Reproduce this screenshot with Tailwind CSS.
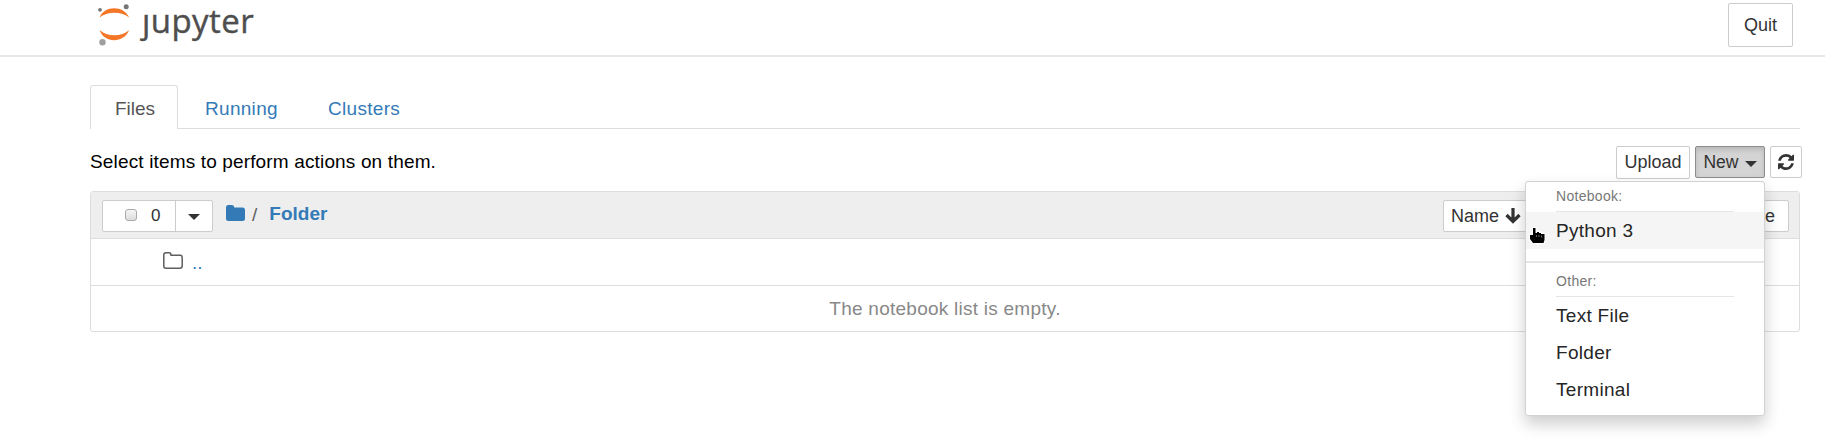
<!DOCTYPE html>
<html lang="en"><head><meta charset="utf-8"><title>Jupyter</title>
<script src="https://cdn.jsdelivr.net/npm/@tailwindcss/browser@4"></script></head>
<body class="h-[444px] overflow-hidden bg-white text-[19px] leading-[24px] text-black font-['Liberation_Sans',Arial,sans-serif]">
<header class="flex h-[57px] items-start justify-between border-b-2 border-[#e7e7e7] pl-[96px] pr-[32px]">
  <div class="flex items-start">
    <svg class="h-[48px] w-[36px]" viewBox="0 0 36 48">
      <path d="M3.5 17.5C8 5 28 5 33.2 17.5C26 11 11 11 3.5 17.5Z" fill="#f37726"/>
      <path d="M3.5 30C8 43.500 28 43.500 33.200 30C26 37 11 37 3.500 30Z" fill="#f37726"/>
      <circle cx="4" cy="9.800" r="1.900" fill="#767677"/><circle cx="30.200" cy="6.700" r="2.500" fill="#767677"/><circle cx="6.500" cy="42.200" r="3.200" fill="#9e9e9e"/>
    </svg>
    <span class="ml-[10px] mt-[3px] text-[33px] leading-[36px] tracking-[0.45px] text-[#4e4e4e] font-['Open_Sans',sans-serif] [-webkit-text-stroke:0.4px_#4e4e4e]">ȷupyter</span>
  </div>
  <div class="mt-[3px] flex h-[44px] w-[65px] items-center justify-center rounded-[2px] border border-[#ccc] text-[#333] text-[18px]">Quit</div>
</header>
<main class="ml-[90px] mt-[28px] w-[1710px]">
  <nav class="flex h-[44px] border-b border-[#ddd] tracking-[0.3px]">
    <div class="h-[44px] w-[88px] rounded-t-[3px] border border-b-0 border-[#ddd] bg-white pl-[24px] pt-[11px] text-[#555]"><span class="tracking-normal">Files</span></div>
    <div class="w-[122px] pl-[27px] pt-[12px] text-[#337ab7]">Running</div>
    <div class="pl-[28px] pt-[12px] text-[#337ab7]">Clusters</div>
  </nav>
  <div class="relative -mr-[2px] flex h-[62px] items-start justify-between pt-[17px]">
    <div class="pt-[4px] tracking-[0.15px]"><span>Select items to perform actions on them.</span></div>
    <div class="flex items-start gap-[5px] text-[18px] text-[#333]">
      <div class="flex h-[33px] w-[74px] items-center justify-center rounded-[2px] border border-[#ccc] pb-[1px]">Upload</div>
      <div class="flex h-[32px] w-[70px] items-center justify-center gap-[6px] rounded-[2px] border border-[#8c8c8c] bg-[#d4d4d4] shadow-[inset_0_3px_5px_rgba(0,0,0,.125)] text-[17.500px]">New<svg class="mt-[3px] h-[6px] w-[12px]" viewBox="0 0 12 6"><path d="M0 0H12L6 6Z" fill="#333"/></svg></div>
      <div class="flex h-[32px] w-[32px] items-center justify-center rounded-[2px] border border-[#ccc] pb-[1px]"><svg class="h-[16px] w-[16px]" viewBox="0 0 1536 1536" fill="#333"><path d="M1511 928q0 5-1 7-64 268-268 434.500T764 1536q-146 0-282.500-55T238 1324l-129 129q-19 19-45 19t-45-19-19-45V960q0-26 19-45t45-19h448q26 0 45 19t19 45-19 45l-137 137q71 66 161 102t187 36q134 0 250-65t186-179q11-17 53-117 8-23 30-23h192q13 0 22.500 9.500t9.500 22.500zm25-800v448q0 26-19 45t-45 19h-448q-26 0-45-19t-19-45 19-45l138-138Q969 256 768 256q-134 0-250 65T332 500q-11 17-53 117-8 23-30 23H50q-13 0-22.500-9.500T18 608v-7q65-268 270-434.500T768 0q146 0 284 55.500T1297 212l130-129q19-19 45-19t45 19 19 45z"/></svg></div>
    </div>
    <div class="absolute right-[37px] top-[52px] z-10 h-[235px] w-[240px] rounded-[3px] border border-[#d2d2d2] bg-white tracking-[0.3px] text-[#262626] shadow-[0_8px_16px_rgba(0,0,0,.2)]">
      <div class="mx-[30px] h-[30px] border-b border-[#e5e5e5] pt-[2px] text-[14px] text-[#777]"><span>Notebook:</span></div>
      <div class="relative flex h-[37px] items-center bg-[#f5f5f5] pl-[30px]"><span>Python 3</span>
        <svg class="absolute left-[3px] top-[15px] h-[18px] w-[17px]" viewBox="0 0 17 18"><path d="M4 1H6.500V6H8V5H10V6H12V7H15.500V13L14.500 16H4L1 12V8H4Z" fill="#000" stroke="#fff" stroke-width="2.500" paint-order="stroke" stroke-linejoin="round"/><path d="M7.500 8V10M10 8V10M12.500 8.500V10.500" stroke="#aaa" stroke-width=".6"/></svg>
      </div>
      <div class="mt-[12px] h-[2px] bg-[#e5e5e5]"></div>
      <div class="mx-[30px] h-[34px] border-b border-[#e5e5e5] pt-[6px] text-[14px] text-[#777]"><span>Other:</span></div>
      <div class="flex h-[37px] items-center pl-[30px]"><span>Text File</span></div>
      <div class="flex h-[37px] items-center pl-[30px]"><span>Folder</span></div>
      <div class="flex h-[37px] items-center pl-[30px]"><span>Terminal</span></div>
    </div>
  </div>
  <section class="rounded-[3px] border border-[#ddd]">
    <div class="flex h-[47px] justify-between border-b border-[#ddd] bg-[#eee] pl-[11px] pr-[10px] pt-[8px]">
      <div class="flex items-start">
        <div class="flex h-[32px] w-[111px] rounded-[2px] border border-[#ccc] bg-white text-[17px] text-[#333]">
          <div class="flex w-[73px] items-center border-r border-[#ccc] pl-[22px]"><i class="-mt-[2px] h-[12px] w-[12px] rounded-[3px] border border-[#aaa] bg-linear-to-b from-[#f5f5f5] to-[#ddd]"></i><span class="ml-[14px]">0</span></div>
          <svg class="ml-[12px] mt-[13px] h-[6px] w-[12px]" viewBox="0 0 12 6"><path d="M0 0H12L6 6Z" fill="#333"/></svg>
        </div>
        <svg class="ml-[13px] mt-[5px] h-[16px] w-[19px]" viewBox="0 0 19 16"><path d="M0 2.500Q0 0 2.500 0H6Q8.300 0 8.300 2.500H16.500Q19 2.500 19 5V13.500Q19 16 16.500 16H2.500Q0 16 0 13.500Z" fill="#337ab7"/></svg>
        <span class="ml-[7px] mt-[3px] text-[#5e5e5e]">/</span>
        <span class="ml-[12px] mt-[2px] font-bold text-[#337ab7]">Folder</span>
      </div>
      <div class="flex h-[32px] text-[18px] text-[#333]">
        <div class="flex w-[90px] items-center gap-[6px] rounded-[2px] border border-[#ccc] bg-white pl-[7px]">Name<svg class="h-[16px] w-[16px]" viewBox="0 0 16 16"><path d="M8 0V13M1.500 7L8 13.500L14.500 7" fill="none" stroke="#333" stroke-width="3.200"/></svg></div>
        <div class="ml-[156px] flex w-[100px] items-center justify-end rounded-[2px] border border-[#ccc] bg-white pr-[13px]">File size</div>
      </div>
    </div>
    <div class="flex h-[47px] border-b border-[#ddd] pl-[72px] pt-[13px]">
      <svg class="h-[17px] w-[20px]" viewBox="0 0 20 17"><path d="M.8 3Q.8.800 3 .800H6Q8 .800 8 3.300H17Q19.200 3.300 19.200 5.500V14Q19.200 16.200 17 16.200H3Q.8 16.200 .800 14Z" fill="none" stroke="#5e5e5e" stroke-width="1.500"/></svg>
      <span class="ml-[9px] -mt-[1px] text-[#337ab7]">..</span>
    </div>
    <div class="flex h-[45px] items-center justify-center tracking-[0.25px] text-[#888]"><span>The notebook list is empty.</span></div>
  </section>
</main>
</body></html>
